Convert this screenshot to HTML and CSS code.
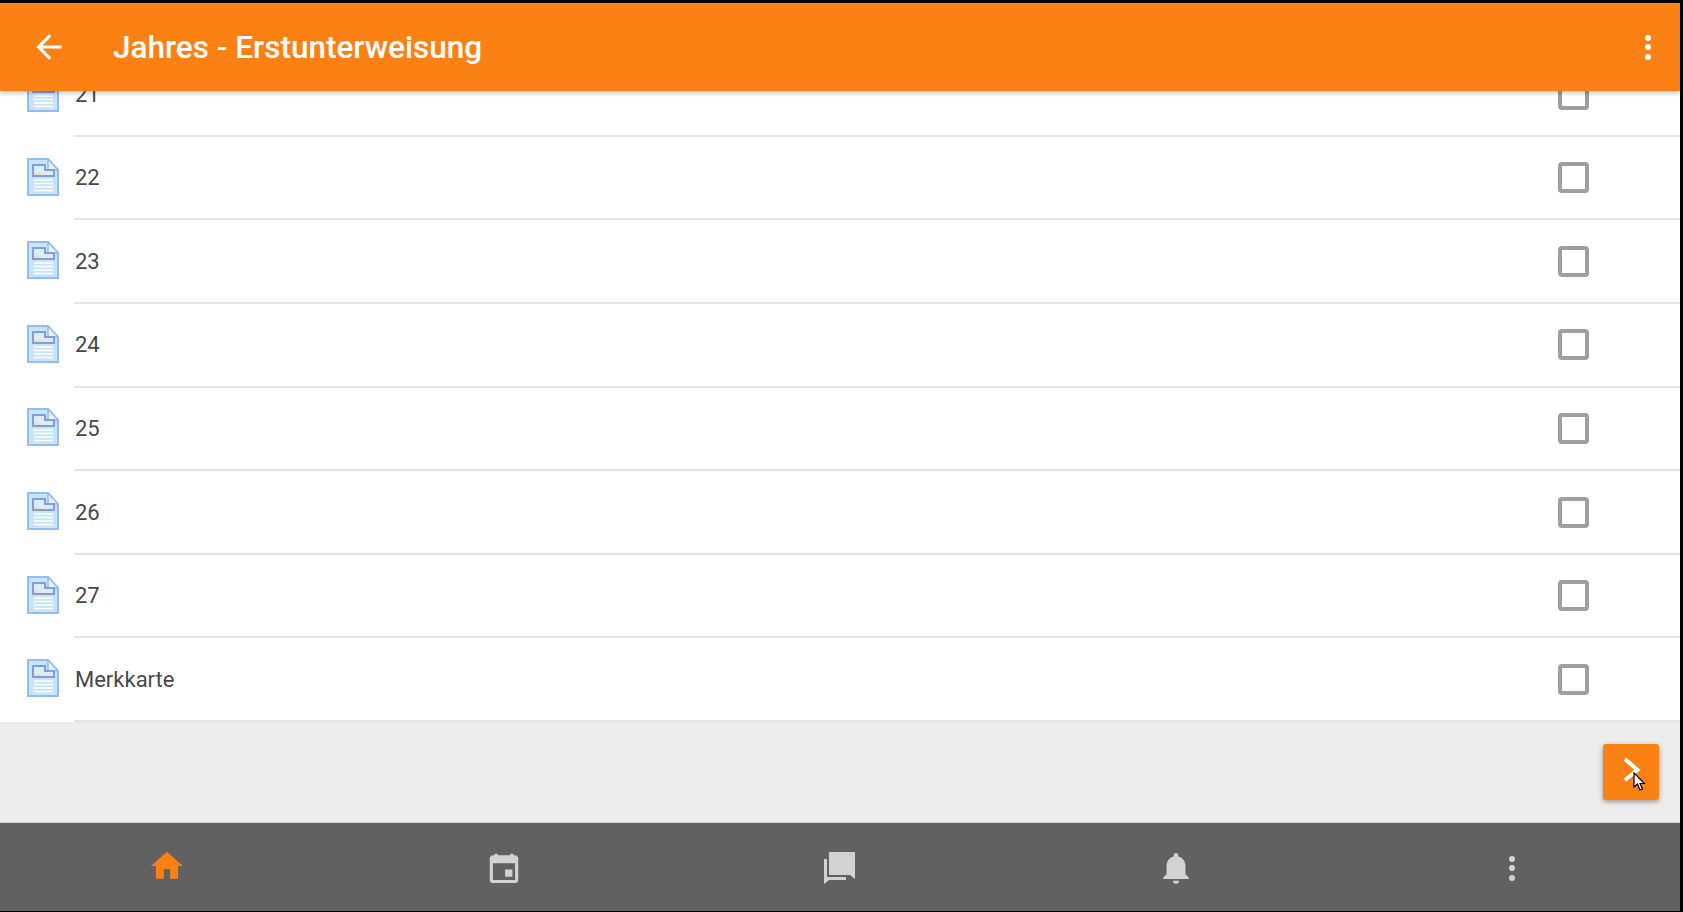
FILE: index.html
```html
<!DOCTYPE html>
<html lang="de">
  <head>
    <meta charset="UTF-8" />
    <meta name="viewport" content="width=device-width, initial-scale=1.0" />
    <title>Jahres - Erstunterweisung</title>
    <link rel="stylesheet" href="styles.css">
  </head>
  <body>
    <svg class="icon-defs" width="0" height="0">
      <symbol id="doc" viewBox="0 0 32 38">
        <path d="M1 1H21L31 12V37H1Z" fill="#c9e3fc" stroke="#93bcf3" stroke-width="2" />
        <path d="M21 1V12H31Z" fill="#e8f3fe" stroke="#93bcf3" stroke-width="1.5" />
        <path d="M6 7H18V12H27V18H6Z" fill="#dcecfb" stroke="#7f9fd8" stroke-width="2" />
        <path d="M7 15H14V17H7Z" fill="#f6dcb4" />
        <path d="M7 22H26M7 25.5H26M7 29H26M7 32.5H26" stroke="#fff" stroke-width="1.6" />
      </symbol>
    </svg>

    <div class="screen">
      <header class="app-bar">
        <svg class="back-icon" viewBox="0 0 24 24"><path d="M20 11H7.83l5.59-5.59L12 4l-8 8 8 8 1.41-1.41L7.83 13H20v-2z" /></svg>
        <h1>Jahres - Erstunterweisung</h1>
        <div class="dots"><span></span><span></span><span></span></div>
      </header>

      <ul class="doc-list">
        <li>
          <svg class="doc-icon"><use href="#doc" /></svg>
          <div class="row-body"><span>21</span><i class="checkbox"></i></div>
        </li>
        <li>
          <svg class="doc-icon"><use href="#doc" /></svg>
          <div class="row-body"><span>22</span><i class="checkbox"></i></div>
        </li>
        <li>
          <svg class="doc-icon"><use href="#doc" /></svg>
          <div class="row-body"><span>23</span><i class="checkbox"></i></div>
        </li>
        <li>
          <svg class="doc-icon"><use href="#doc" /></svg>
          <div class="row-body"><span>24</span><i class="checkbox"></i></div>
        </li>
        <li>
          <svg class="doc-icon"><use href="#doc" /></svg>
          <div class="row-body"><span>25</span><i class="checkbox"></i></div>
        </li>
        <li>
          <svg class="doc-icon"><use href="#doc" /></svg>
          <div class="row-body"><span>26</span><i class="checkbox"></i></div>
        </li>
        <li>
          <svg class="doc-icon"><use href="#doc" /></svg>
          <div class="row-body"><span>27</span><i class="checkbox"></i></div>
        </li>
        <li>
          <svg class="doc-icon"><use href="#doc" /></svg>
          <div class="row-body"><span>Merkkarte</span><i class="checkbox"></i></div>
        </li>
      </ul>

      <div class="action-bar">
        <button class="next-button">
          <svg class="chevron" viewBox="0 0 56 56"><path d="M22 15L34.5 26L22 36" /></svg>
          <svg class="cursor" viewBox="0 0 14 20"><path d="M1 1V15L4.5 12L7 18L9.5 17L7 11.5H11.5Z" /></svg>
        </button>
      </div>

      <nav class="bottom-nav">
        <a class="active"><svg class="nav-home" viewBox="0 0 24 24"><path d="M10 20v-6h4v6h5v-8h3L12 3 2 12h3v8z" /></svg></a>
        <a><svg viewBox="0 0 24 24"><path fill-rule="evenodd" d="M16 3v1H8V3H6v1H5c-1.1 0-2 .9-2 2v13.5c0 1.1.9 2 2 2h14c1.1 0 2-.9 2-2V6c0-1.1-.9-2-2-2h-1V3h-2zM19 19.5H5V9h14v10.5zM17.3 13h-4.6v4.6h4.6V13z" /></svg></a>
        <a><svg class="nav-chat" viewBox="0 0 32 32"><path d="M6 0H30a1 1 0 0 1 1 1V27L26 23H6a1 1 0 0 1-1-1V1a1 1 0 0 1 1-1z" /><path d="M0 7H3V25H22V28H5L0 32z" /></svg></a>
        <a><svg viewBox="0 0 24 24"><path d="M12 22c1.1 0 2-.9 2-2h-4c0 1.1.89 2 2 2zm6-6v-5c0-3.07-1.64-5.64-4.5-6.32V4c0-.83-.67-1.5-1.5-1.5s-1.5.67-1.5 1.5v.68C7.63 5.36 6 7.92 6 11v5l-2 2v1h16v-1l-2-2z" /></svg></a>
        <a><div class="dots dots-nav"><span></span><span></span><span></span></div></a>
      </nav>
    </div>
  </body>
</html>
```

FILE: styles.css
```css
body {
  font-family: Roboto, "Liberation Sans", sans-serif;
  margin: 0;
  padding: 3px 3px 1px 0;
  background-color: #000;
  height: 100vh;
  box-sizing: border-box;
  overflow: hidden;
}

.icon-defs {
  display: block;
  height: 0;
}

.screen {
  display: flex;
  flex-direction: column;
  height: 100%;
  background-color: #fff;
}

.app-bar {
  position: relative;
  z-index: 2;
  flex: 0 0 88px;
  display: flex;
  align-items: center;
  padding: 0 29px 0 30px;
  background-color: #fb8114;
  color: #fff;
  box-shadow: 0 2px 5px rgba(0, 0, 0, 0.25);
}

.app-bar h1 {
  flex: 1;
  margin: 0 0 0 45px;
  font-size: 31.5px;
  font-weight: 500;
}

.back-icon {
  width: 38px;
  height: 38px;
  fill: #fff;
}

.dots {
  display: flex;
  flex-direction: column;
  gap: 3.5px;
}

.dots span {
  width: 6px;
  height: 6px;
  border-radius: 50%;
  background-color: #fff;
}

.dots-nav span {
  background-color: #d2d2d2;
}

.doc-list {
  flex: 1;
  min-height: 0;
  display: flex;
  flex-direction: column;
  justify-content: flex-end;
  overflow: hidden;
  list-style: none;
  margin: 0;
  padding: 0;
}

.doc-list li {
  flex: 0 0 83.6px;
  display: flex;
  align-items: center;
  padding-left: 27px;
}

.doc-icon {
  flex: none;
  width: 32px;
  height: 38px;
  margin-bottom: 4px;
}

.row-body {
  flex: 1;
  align-self: stretch;
  display: flex;
  align-items: center;
  justify-content: space-between;
  margin-left: 15px;
  padding-right: 91px;
  border-bottom: 2px solid #e4e4e4;
  font-size: 22px;
  color: #484848;
}

.row-body span {
  margin-left: 1px;
}

.checkbox {
  width: 31px;
  height: 31px;
  box-sizing: border-box;
  border: 4px solid #9e9e9e;
  border-radius: 4px;
}

.action-bar {
  flex: 0 0 101px;
  display: flex;
  align-items: center;
  justify-content: flex-end;
  padding-right: 21px;
  background-color: #ececec;
  border-bottom: 1px solid #cfcfcf;
  box-sizing: border-box;
}

.next-button {
  position: relative;
  width: 56px;
  height: 56px;
  padding: 0;
  border: none;
  border-radius: 3px;
  background-color: #fb8114;
  box-shadow: 0 2px 5px rgba(0, 0, 0, 0.35);
}

.chevron {
  display: block;
  width: 56px;
  height: 56px;
  fill: none;
  stroke: #fff;
  stroke-width: 4;
}

/* mouse pointer caught in the capture */
.cursor {
  position: absolute;
  left: 30px;
  top: 28px;
  width: 14px;
  height: 20px;
  fill: #fff;
  stroke: #000;
  stroke-width: 1.2;
}

.bottom-nav {
  flex: 0 0 88px;
  display: grid;
  grid-template-columns: repeat(5, 1fr);
  padding-top: 2px;
  box-sizing: border-box;
  background-color: #616161;
}

.bottom-nav a {
  display: flex;
  align-items: center;
  justify-content: center;
}

.bottom-nav svg {
  width: 38px;
  height: 38px;
  fill: #d2d2d2;
}

.bottom-nav a.active svg {
  fill: #fb8114;
}

.bottom-nav .nav-home {
  margin: 0 2px 4px 0;
}

.bottom-nav .nav-chat {
  width: 32px;
  height: 32px;
}
```
